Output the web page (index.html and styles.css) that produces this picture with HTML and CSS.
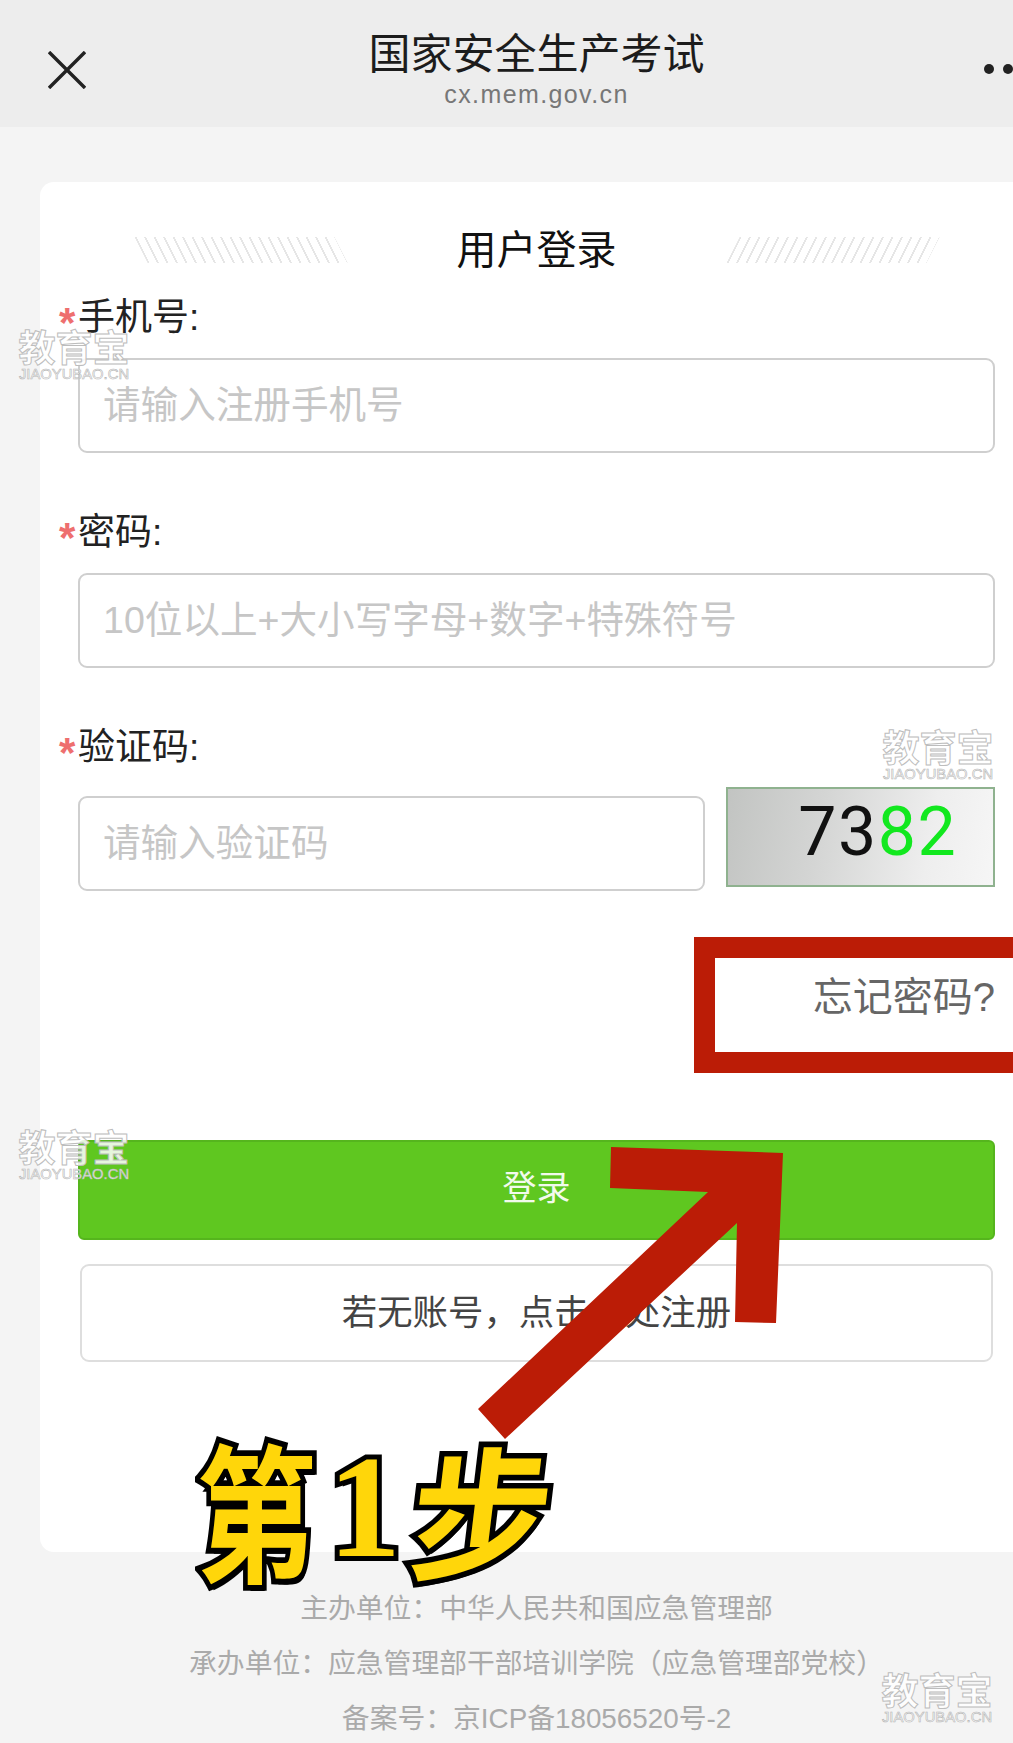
FILE: index.html
```html
<!DOCTYPE html>
<html lang="zh-CN">
<head>
    <meta charset="UTF-8">
    <meta name="viewport" content="width=device-width, initial-scale=1.0">
    <title>国家安全生产考试</title>
    <link rel="stylesheet" href="styles.css">
</head>
<body>
    <header class="top-bar">
        <svg class="close-icon" width="38" height="38" viewBox="0 0 38 38">
            <path d="M1 1 L37 37 M37 1 L1 37" fill="none" stroke="#222" stroke-width="3.4"/>
        </svg>
        <div class="top-title">
            <div class="site-name">国家安全生产考试</div>
            <div class="site-url">cx.mem.gov.cn</div>
        </div>
        <div class="more-dots"><span></span><span></span></div>
    </header>

    <main class="card">
        <div class="card-head">
            <div class="hatch hatch-left"></div>
            <h1>用户登录</h1>
            <div class="hatch hatch-right"></div>
        </div>

        <form class="login-form">
            <label class="field-label"><span class="star">*</span>手机号:</label>
            <input class="text-input" type="text" placeholder="请输入注册手机号">

            <label class="field-label gap-top"><span class="star">*</span>密码:</label>
            <input class="text-input" type="text" placeholder="10位以上+大小写字母+数字+特殊符号">

            <label class="field-label gap-top"><span class="star">*</span>验证码:</label>
            <div class="captcha-row">
                <input class="text-input captcha-input" type="text" placeholder="请输入验证码">
                <div class="captcha-img"><span>73</span><span class="green">82</span></div>
            </div>

            <div class="forgot">忘记密码?</div>

            <button class="btn-login" type="button">登录</button>
            <button class="btn-register" type="button">若无账号，点击此处注册</button>
        </form>
    </main>

    <footer class="page-foot">
        <p>主办单位：中华人民共和国应急管理部</p>
        <p>承办单位：应急管理部干部培训学院（应急管理部党校）</p>
        <p>备案号：京ICP备18056520号-2</p>
    </footer>

    <!-- annotations drawn on top of the screenshot -->
    <div class="red-box"></div>
    <svg class="red-arrow" width="1013" height="1743" viewBox="0 0 1013 1743">
        <polygon fill="#bb1c06" points="611,1147 783,1153 776,1323 735,1322 737,1223 505,1439 478,1409 708,1192 610,1188"/>
    </svg>
    <div class="step-tag"><span class="step-a">第</span><span class="step-num">1</span><span class="step-b">步</span></div>

    <div class="mark mark-1"><b>教育宝</b><i>JIAOYUBAO.CN</i></div>
    <div class="mark mark-2"><b>教育宝</b><i>JIAOYUBAO.CN</i></div>
    <div class="mark mark-3"><b>教育宝</b><i>JIAOYUBAO.CN</i></div>
    <div class="mark mark-4"><b>教育宝</b><i>JIAOYUBAO.CN</i></div>
</body>
</html>
```

FILE: styles.css
```css
html, body {
    margin: 0;
    padding: 0;
}

body {
    position: relative;
    width: 1013px;
    height: 1743px;
    overflow: hidden;
    background-color: #f4f4f4;
    font-family: "Liberation Sans", "Noto Sans CJK SC", sans-serif;
    color: #222;
}

/* the shot is cropped on the right, so the centre of the page sits at 536px */
.top-bar {
    height: 127px;
    box-sizing: border-box;
    background-color: #ededed;
    display: grid;
    grid-template-columns: 368px 337px 1fr;
}

.close-icon {
    margin: 51px 0 0 48px;
}

.top-title {
    padding-top: 30px;
    text-align: center;
}

.site-name {
    font-size: 42px;
    line-height: 50px;
    color: #1c1c1c;
}

.site-url {
    font-size: 25px;
    line-height: 28px;
    letter-spacing: 1.4px;
    white-space: nowrap;
    color: #777;
}

.more-dots {
    display: flex;
    justify-content: flex-end;
    gap: 9px;
    padding-top: 64px;
}

.more-dots span {
    width: 10px;
    height: 10px;
    border-radius: 50%;
    background-color: #222;
}

.card {
    box-sizing: border-box;
    width: 973px;
    height: 1370px;
    margin: 55px 0 0 40px;
    padding-top: 44px;
    border-radius: 14px 0 0 14px;
    background-color: white;
}

.card-head {
    width: 917px;
    margin-left: 38px;
    height: 48px;
    display: flex;
    justify-content: center;
    align-items: center;
    gap: 109px;
}

.card-head h1 {
    margin: 0;
    font-size: 40px;
    line-height: 48px;
    font-weight: normal;
    color: #111;
}

.hatch {
    width: 200px;
    height: 26px;
    margin: 0 7px;
    background-image: repeating-linear-gradient(90deg, #e6e6e6 0, #e6e6e6 2px, transparent 2px, transparent 9.5px);
}

.hatch-left {
    transform: skewX(27deg);
}

.hatch-right {
    transform: skewX(-27deg);
}

.login-form {
    width: 917px;
    margin: 19px 0 0 38px;
}

.field-label {
    display: flex;
    font-size: 37px;
    line-height: 50px;
    color: #222;
}

.gap-top {
    margin-top: 55px;
}

.star {
    width: 19px;
    margin-left: -19px;
    font-size: 42px;
    font-weight: bold;
    line-height: 60px;
    height: 50px;
    color: #ee6f6f;
}

.text-input {
    display: block;
    box-sizing: border-box;
    width: 100%;
    height: 95px;
    margin: 15px 0 0;
    padding: 0 23px;
    border: 2px solid #cfcfcf;
    border-radius: 9px;
    background-color: white;
    font-family: inherit;
    font-size: 37.6px;
    outline: none;
}

.text-input::placeholder {
    color: #c6c6c6;
}

.captcha-row {
    display: flex;
    gap: 21px;
    margin-top: 14px;
}

.captcha-input {
    width: 628px;
    margin-top: 9px;
}

.captcha-img {
    box-sizing: border-box;
    width: 269px;
    height: 100px;
    padding-left: 70px;
    border: 2px solid #8fb28f;
    background-image: linear-gradient(100deg, #c2c4c2 0%, #d4d5d4 35%, #eeeeee 75%, #f6f6f6 100%);
    font-family: Roboto, sans-serif;
    font-size: 68px;
    line-height: 86px;
    letter-spacing: 1.5px;
    color: #111;
}

.captcha-img .green {
    color: #12e81f;
}

.forgot {
    margin-top: 81px;
    font-size: 40px;
    line-height: 50px;
    text-align: right;
    color: #666;
}

.btn-login,
.btn-register {
    display: block;
    font-family: inherit;
    cursor: pointer;
}

.btn-login {
    width: 100%;
    height: 100px;
    margin-top: 118px;
    padding-bottom: 10px;
    border: 2px solid #55b51d;
    border-radius: 6px;
    background-color: #5fc720;
    font-size: 34px;
    color: #f2faec;
}

.btn-register {
    width: 913px;
    height: 98px;
    margin: 24px 0 0 2px;
    padding-bottom: 8px;
    border: 2px solid #dedede;
    border-radius: 9px;
    background-color: white;
    font-size: 35.4px;
    color: #444;
}

.page-foot {
    box-sizing: border-box;
    padding-left: 60px;
    margin-top: 29px;
    text-align: center;
    font-size: 27.8px;
    line-height: 55px;
    color: #aaa;
}

.page-foot p {
    margin: 0;
}

/* overlays */
.red-box {
    position: absolute;
    left: 694px;
    top: 937px;
    width: 298px;
    height: 94px;
    border: 21px solid #bb1c06;
    border-right: 0;
}

.red-arrow {
    position: absolute;
    left: 0;
    top: 0;
}

.step-tag {
    position: absolute;
    left: 196px;
    top: 1422px;
    display: flex;
    align-items: center;
    font-family: "Noto Sans CJK SC", sans-serif;
    font-size: 128px;
    font-weight: 700;
    line-height: 170px;
    color: #ffd60a;
    -webkit-text-stroke: 10px #000;
    paint-order: stroke fill;
    text-shadow: 3px 5px 0 #000;
}

.step-a,
.step-b {
    display: block;
    width: 132px;
    transform-origin: left center;
}

.step-a {
    transform: scale(0.94, 1.16);
}

.step-b {
    transform: scale(1.1, 1.12) skewX(-7deg);
}

.step-num {
    width: 84px;
    font-family: "Liberation Serif", serif;
    font-size: 146px;
    font-weight: bold;
}

.mark {
    position: absolute;
    width: 112px;
    text-align: center;
}

.mark b {
    display: block;
    font-family: "Noto Sans CJK SC", sans-serif;
    font-size: 37px;
    line-height: 36px;
    white-space: nowrap;
    color: rgba(255, 255, 255, 0.85);
    -webkit-text-stroke: 1px #bdbdbd;
}

.mark i {
    display: block;
    margin-top: 3px;
    font-style: normal;
    font-size: 14.8px;
    line-height: 14px;
    white-space: nowrap;
    color: rgba(255, 255, 255, 0.85);
    -webkit-text-stroke: 0.6px #b5b5b5;
}

.mark-1 { left: 18px; top: 328px; }
.mark-2 { left: 882px; top: 728px; }
.mark-3 { left: 18px; top: 1128px; }
.mark-4 { left: 881px; top: 1671px; }
```
